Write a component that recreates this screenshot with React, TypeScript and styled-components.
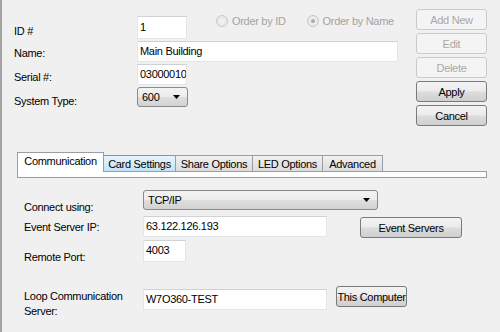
import React from "react";
import styled, { createGlobalStyle, css } from "styled-components";

const GlobalStyle = createGlobalStyle`
  html, body { margin: 0; padding: 0; background: #f0f0f0; }
  body { width: 500px; height: 332px; overflow: hidden; }
`;

const Window = styled.div`
  box-sizing: border-box;
  width: 500px;
  height: 332px;
  background: #f0f0f0;
  border-left: 2px solid #a3a3a3;
  font-family: "Liberation Sans", Arial, sans-serif;
  font-size: 11px;
  letter-spacing: -0.3px;
  color: #000;
  display: flex;
  flex-direction: column;
  overflow: hidden;
`;

const Top = styled.div`
  box-sizing: border-box;
  height: 152px;
  display: flex;
  align-items: flex-start;
  padding: 9px 13px 0 12px;
`;

const FormGrid = styled.div`
  margin-top: 7px;
  display: grid;
  grid-template-columns: 123px auto;
  grid-template-rows: 23px 21px 21px 20px;
  row-gap: 2px;
`;

const Label = styled.div<{ $pt?: number }>`
  padding-top: ${(p) => p.$pt ?? 0}px;
  line-height: 14px;
  white-space: nowrap;
`;

const Cell = styled.div`
  display: flex;
  align-items: flex-start;
`;

const TextBox = styled.input<{ $w: number; $h: number }>`
  box-sizing: border-box;
  width: ${(p) => p.$w}px;
  height: ${(p) => p.$h}px;
  margin: 0;
  padding: 0 0 2px 2px;
  background: #fff;
  border: 1px solid #e3e5e8;
  border-top-color: #cfd1d5;
  font: inherit;
  letter-spacing: inherit;
  color: #000;
  outline: none;
  flex: none;
`;

const Combo = styled.div<{ $w: number }>`
  box-sizing: border-box;
  width: ${(p) => p.$w}px;
  height: 20px;
  display: flex;
  align-items: center;
  justify-content: space-between;
  padding: 0 7px 0 4px;
  border: 1px solid #8a8a8a;
  border-radius: 3px;
  background: linear-gradient(#f3f3f3 0%, #ececec 48%, #dedede 52%, #d2d2d2 100%);
  line-height: 14px;
  flex: none;
`;

const Arrow = () => (
  <svg width="7" height="4" viewBox="0 0 7 4">
    <path d="M0 0h7L3.5 4z" fill="#000" />
  </svg>
);

const RadioGroup = styled.div`
  display: flex;
  align-items: center;
  margin: -2px 0 0 29px;
`;

const RadioItem = styled.div<{ $ml?: number }>`
  display: flex;
  align-items: center;
  gap: 4px;
  margin-left: ${(p) => p.$ml ?? 0}px;
  color: #a3a3a3;
  line-height: 14px;
`;

const RadioDot = styled.span<{ $checked?: boolean }>`
  box-sizing: border-box;
  width: 12px;
  height: 12px;
  border-radius: 50%;
  border: 1px solid #c7c7c7;
  background: radial-gradient(circle, #f4f4f4 0%, #e2e2e2 100%);
  display: flex;
  align-items: center;
  justify-content: center;
  &::after {
    content: "";
    width: 4px;
    height: 4px;
    border-radius: 50%;
    background: ${(p) => (p.$checked ? "#a9a9a9" : "transparent")};
  }
`;

const ButtonColumn = styled.div`
  margin-left: auto;
  display: flex;
  flex-direction: column;
  gap: 3px;
  width: 71px;
`;

const WinButton = styled.button<{ $w?: number; $mt?: number; $ml?: number }>`
  box-sizing: border-box;
  width: ${(p) => p.$w ?? 71}px;
  height: 21px;
  margin: ${(p) => p.$mt ?? 0}px 0 0 ${(p) => p.$ml ?? 0}px;
  padding: 0;
  font: inherit;
  letter-spacing: inherit;
  color: #000;
  border: 1px solid #7a7a7a;
  border-radius: 3px;
  background: linear-gradient(#f3f3f3 0%, #ebebeb 48%, #dddddd 52%, #cfcfcf 100%);
  white-space: nowrap;
  flex: none;
  &:disabled {
    color: #a8a8a8;
    border-color: #c8cacc;
    background: #f4f4f4;
  }
`;

const TabControl = styled.div`
  margin-left: 15px;
  width: 470px;
  display: flex;
  flex-direction: column;
`;

const TabStrip = styled.div`
  display: flex;
  align-items: flex-end;
  height: 19px;
  position: relative;
  z-index: 1;
`;

const Tab = styled.div<{ $w: number; $active?: boolean; $hover?: boolean }>`
  box-sizing: border-box;
  width: ${(p) => p.$w}px;
  height: 16px;
  margin-right: -1px;
  display: flex;
  align-items: center;
  justify-content: center;
  border: 1px solid #9a9da5;
  border-bottom: none;
  background: linear-gradient(#f2f2f2, #e6e6e6 50%, #dcdcdc);
  line-height: 14px;
  white-space: nowrap;
  ${(p) =>
    p.$hover &&
    css`
      border-color: #6d9cc4;
      background: linear-gradient(#e8f4fc, #d6ecfa 50%, #c4e3f7);
    `}
  ${(p) =>
    p.$active &&
    css`
      height: 20px;
      margin-bottom: -1px;
      padding-bottom: 3px;
      background: #fff;
      position: relative;
      z-index: 2;
    `}
`;

const TabPanel = styled.div`
  box-sizing: border-box;
  height: 7px;
  background: #fff;
  border: 1px solid #9a9da5;
`;

const Lower = styled.div`
  display: flex;
  flex-direction: column;
  padding-left: 22px;
`;

const Row = styled.div<{ $mt: number; $h: number }>`
  display: flex;
  align-items: flex-start;
  height: ${(p) => p.$h}px;
  margin-top: ${(p) => p.$mt}px;
`;

const RowLabel = styled(Label)<{ $lh?: number }>`
  width: 119px;
  flex: none;
  line-height: ${(p) => p.$lh ?? 14}px;
`;

const tabs = [
  { label: "Communication", w: 87, active: true },
  { label: "Card Settings", w: 73, hover: true },
  { label: "Share Options", w: 78 },
  { label: "LED Options", w: 71 },
  { label: "Advanced", w: 61 },
];

export default function App() {
  return (
    <>
      <GlobalStyle />
      <Window>
        <Top>
          <FormGrid>
            <Label $pt={8}>ID #</Label>
            <Cell>
              <TextBox $w={50} $h={23} defaultValue="1" readOnly />
              <RadioGroup>
                <RadioItem>
                  <RadioDot />
                  Order by ID
                </RadioItem>
                <RadioItem $ml={21}>
                  <RadioDot $checked />
                  Order by Name
                </RadioItem>
              </RadioGroup>
            </Cell>
            <Label $pt={5}>Name:</Label>
            <Cell>
              <TextBox $w={261} $h={21} defaultValue="Main Building" readOnly />
            </Cell>
            <Label $pt={6}>Serial #:</Label>
            <Cell>
              <TextBox $w={50} $h={21} defaultValue="03000010" readOnly />
            </Cell>
            <Label $pt={7}>System Type:</Label>
            <Cell>
              <Combo $w={51}>
                600
                <Arrow />
              </Combo>
            </Cell>
          </FormGrid>
          <ButtonColumn>
            <WinButton disabled>Add New</WinButton>
            <WinButton disabled>Edit</WinButton>
            <WinButton disabled>Delete</WinButton>
            <WinButton>Apply</WinButton>
            <WinButton>Cancel</WinButton>
          </ButtonColumn>
        </Top>
        <TabControl>
          <TabStrip>
            {tabs.map((t) => (
              <Tab key={t.label} $w={t.w} $active={t.active} $hover={t.hover}>
                {t.label}
              </Tab>
            ))}
          </TabStrip>
          <TabPanel />
        </TabControl>
        <Lower>
          <Row $mt={12} $h={20}>
            <RowLabel $pt={10}>Connect using:</RowLabel>
            <Combo $w={235}>
              TCP/IP
              <Arrow />
            </Combo>
          </Row>
          <Row $mt={6} $h={22}>
            <RowLabel $pt={4}>Event Server IP:</RowLabel>
            <TextBox $w={184} $h={21} defaultValue="63.122.126.193" readOnly />
            <WinButton $w={102} $ml={33} $mt={1}>
              Event Servers
            </WinButton>
          </Row>
          <Row $mt={2} $h={22}>
            <RowLabel $pt={10}>Remote Port:</RowLabel>
            <TextBox $w={43} $h={22} defaultValue="4003" readOnly />
          </Row>
          <Row $mt={27} $h={21}>
            <RowLabel $pt={0} $lh={15}>
              Loop Communication
              <br />
              Server:
            </RowLabel>
            <TextBox $w={184} $h={21} defaultValue="W7O360-TEST" readOnly />
            <WinButton $w={71} $ml={9} $mt={-3}>
              This Computer
            </WinButton>
          </Row>
        </Lower>
      </Window>
    </>
  );
}
